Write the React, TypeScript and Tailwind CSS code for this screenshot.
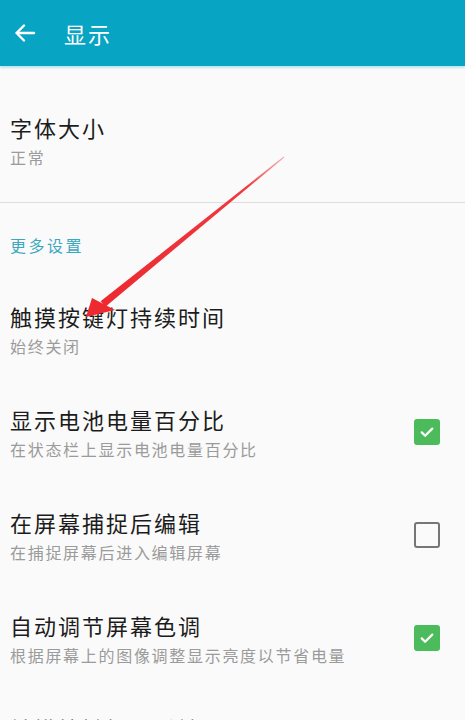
import React from 'react';

const font = { fontFamily: '"Noto Sans CJK SC", "Noto Sans", sans-serif' };

interface Item {
    title: string;
    summary: string;
    checked?: boolean;
}

const items: Item[] = [
    { title: '触摸按键灯持续时间', summary: '始终关闭' },
    { title: '显示电池电量百分比', summary: '在状态栏上显示电池电量百分比', checked: true },
    { title: '在屏幕捕捉后编辑', summary: '在捕捉屏幕后进入编辑屏幕', checked: false },
    { title: '自动调节屏幕色调', summary: '根据屏幕上的图像调整显示亮度以节省电量', checked: true },
    { title: '触摸按键振动反馈', summary: '触摸按键时振动' },
];

function Checkbox({ checked }: { checked: boolean }) {
    if (checked) {
        return (
            <div className="w-[26px] h-[26px] rounded-[3px] bg-[#4cbb5b] flex items-center justify-center">
                <svg width="18" height="18" viewBox="0 0 24 24" fill="none" stroke="white" strokeWidth="3" strokeLinecap="round" strokeLinejoin="round">
                    <path d="M5 12.5l4.5 4.5L19 7.5" />
                </svg>
            </div>
        );
    }
    return <div className="w-[26px] h-[26px] rounded-[3px] border-[2.5px] border-[#767676]" />;
}

function Row({ item }: { item: Item }) {
    return (
        <div className="flex items-center pl-[10px] pr-[25px]">
            <div className="flex-1 flex flex-col gap-[5px]">
                <div className="text-[22px] leading-[30px] tracking-[2px] text-[#1c1c1c]">{item.title}</div>
                <div className="text-[16px] leading-[20px] tracking-[1.7px] text-[#9b9b9b]">{item.summary}</div>
            </div>
            {item.checked !== undefined && <Checkbox checked={item.checked} />}
        </div>
    );
}

export default function App() {
    return (
        <div className="relative w-[465px] h-[720px] overflow-hidden bg-[#fafafa]" style={font}>
            {/* 顶部标题栏 */}
            <div className="h-[66px] bg-[#08a4c3] flex items-center shadow-[0_2px_2px_rgba(8,164,195,0.25)]">
                <svg className="ml-[13px]" width="24" height="24" viewBox="0 0 24 24" fill="none" stroke="white" strokeWidth="2.4" strokeLinecap="round" strokeLinejoin="round">
                    <path d="M21 12H3.5M11 4.5L3.5 12l7.5 7.5" />
                </svg>
                <div className="ml-[27px] text-[22px] tracking-[2px] text-white">显示</div>
            </div>

            <div className="pt-[46px] pb-[35px]">
                <Row item={{ title: '字体大小', summary: '正常' }} />
            </div>
            <div className="h-px bg-[#dedede]" />

            <div className="pt-[32px] pl-[10px] text-[16px] leading-[20px] tracking-[2.5px] text-[#3aa8bf]">更多设置</div>

            <div className="pt-[46px] flex flex-col gap-[48px]">
                {items.map(item => <Row key={item.title} item={item} />)}
            </div>

            {/* 红色指示箭头 */}
            <svg className="absolute inset-0 pointer-events-none" width="465" height="720">
                <defs>
                    <linearGradient id="shaft" x1="103" y1="304" x2="284" y2="157" gradientUnits="userSpaceOnUse">
                        <stop offset="0" stopColor="#ec2a30" />
                        <stop offset="0.8" stopColor="#ef3a40" />
                        <stop offset="1" stopColor="#f07a7e" stopOpacity="0.6" />
                    </linearGradient>
                </defs>
                <polygon points="100.6,301.3 105.4,306.7 284.3,157.4 283.7,156.6" fill="url(#shaft)" />
                <polygon points="86,317 92,298 115,310" fill="#ec2a30" />
            </svg>
        </div>
    );
}
